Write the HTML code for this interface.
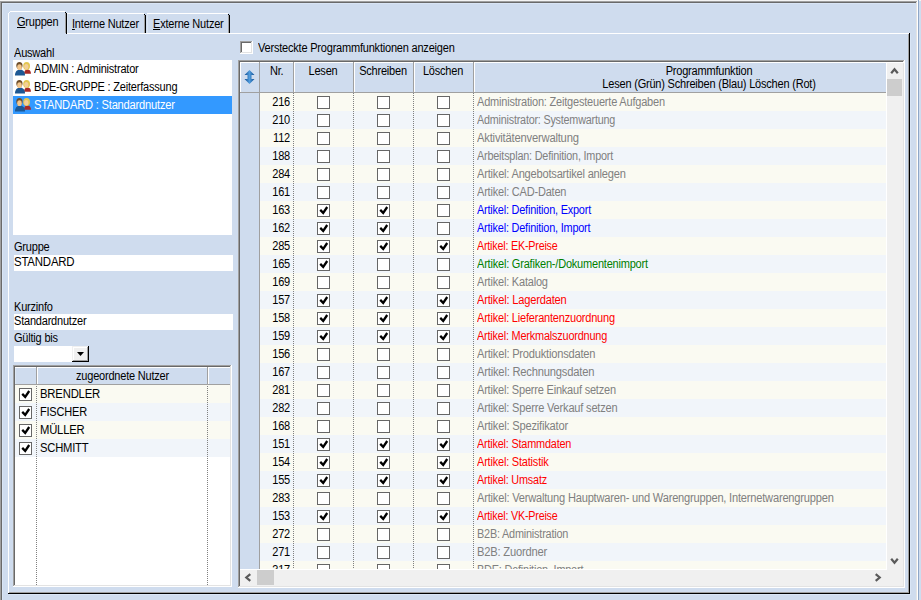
<!DOCTYPE html>
<html><head><meta charset="utf-8"><style>
html,body{margin:0;padding:0;}
body{width:921px;height:600px;overflow:hidden;background:#cfdcee;position:relative;font-family:"Liberation Sans",sans-serif;font-size:11px;}
div,svg{position:absolute;} svg{overflow:visible;}
.t{white-space:nowrap;line-height:13px;font-size:12px;letter-spacing:-0.22px;transform:scaleX(0.9167);transform-origin:0 0;}
.c{transform-origin:50% 0;}
.r{transform-origin:100% 0;}
u{text-decoration:underline;}
</style></head><body>
<div style="left:0px;top:0px;width:921px;height:1px;background:#f4f4f4;"></div><div style="left:0px;top:1px;width:917px;height:1px;background:#a0a0a0;"></div><div style="left:0px;top:1px;width:1px;height:599px;background:#a0a0a0;"></div><div style="left:1px;top:2px;width:915px;height:1px;background:#696969;"></div><div style="left:1px;top:2px;width:1px;height:598px;background:#696969;"></div><div style="left:2px;top:3px;width:913px;height:1px;background:#d9e5f5;"></div><div style="left:2px;top:3px;width:1px;height:597px;background:#d9e5f5;"></div><div style="left:916px;top:2px;width:1px;height:598px;background:#e3e3e3;"></div><div style="left:917px;top:1px;width:1px;height:599px;background:#ffffff;"></div><div style="left:918px;top:0px;width:1px;height:600px;background:#8fa7c8;"></div><div style="left:8px;top:33px;width:901px;height:1px;background:#ffffff;"></div><div style="left:8px;top:33px;width:1px;height:560px;background:#ffffff;"></div><div style="left:908px;top:34px;width:1px;height:559px;background:#a0a0a0;"></div><div style="left:9px;top:592px;width:900px;height:1px;background:#a0a0a0;"></div><div style="left:909px;top:33px;width:1px;height:561px;background:#000000;"></div><div style="left:8px;top:593px;width:902px;height:1px;background:#000000;"></div><div style="left:910px;top:34px;width:1px;height:561px;background:#d9e5f5;"></div><div style="left:9px;top:594px;width:902px;height:1px;background:#d9e5f5;"></div><div style="left:9px;top:12px;width:57px;height:22px;background:#cfdcee;"></div><div style="left:8px;top:13px;width:1px;height:21px;background:#ffffff;"></div><div style="left:9px;top:12px;width:1px;height:1px;background:#ffffff;"></div><div style="left:10px;top:11px;width:55px;height:1px;background:#ffffff;"></div><div style="left:65px;top:12px;width:1px;height:1px;background:#000000;"></div><div style="left:66px;top:13px;width:1px;height:21px;background:#000000;"></div><div style="left:65px;top:13px;width:1px;height:21px;background:#a0a0a0;"></div><div style="left:67px;top:14px;width:1px;height:19px;background:#dbe6f3;"></div><div style="left:67px;top:13px;width:77px;height:1px;background:#ffffff;"></div><div style="left:144px;top:14px;width:1px;height:1px;background:#000000;"></div><div style="left:145px;top:15px;width:1px;height:18px;background:#000000;"></div><div style="left:144px;top:15px;width:1px;height:18px;background:#a0a0a0;"></div><div style="left:147px;top:14px;width:1px;height:19px;background:#dbe6f3;"></div><div style="left:147px;top:13px;width:81px;height:1px;background:#ffffff;"></div><div style="left:228px;top:14px;width:1px;height:1px;background:#000000;"></div><div style="left:229px;top:15px;width:1px;height:18px;background:#000000;"></div><div style="left:228px;top:15px;width:1px;height:18px;background:#a0a0a0;"></div><div style="left:9px;top:33px;width:57px;height:1px;background:#cfdcee;"></div><div class="t" style="left:17px;top:16px;color:#000;"><u>G</u>ruppen</div><div class="t" style="left:72px;top:18px;color:#000;"><u>I</u>nterne Nutzer</div><div class="t" style="left:153px;top:18px;color:#000;"><u>E</u>xterne Nutzer</div><div class="t" style="left:14px;top:47px;color:#000;">Auswahl</div><div style="left:13px;top:60px;width:219px;height:175px;background:#ffffff;"></div><div style="left:13px;top:96px;width:219px;height:18px;background:#3399ff;"></div><svg style="left:14px;top:61px" width="18" height="15" viewBox="0 0 18 15">
<path d="M10 12.8C10 9.8 11.5 8.4 13.5 8.4C15.5 8.4 17 9.8 17 12.8Z" fill="#a82a26"/>
<ellipse cx="12.6" cy="5" rx="3.4" ry="4.1" fill="#e3c650"/>
<ellipse cx="12.3" cy="5.8" rx="2.1" ry="2.7" fill="#f3cf98"/>
<path d="M1 14.5C1 10.8 3 8.6 6 8.6C9 8.6 11 10.8 11 14.5Z" fill="#1d5894"/>
<ellipse cx="5.4" cy="4.6" rx="3.1" ry="3.6" fill="#6f4f2c"/>
<ellipse cx="5.5" cy="6.2" rx="2.3" ry="2.9" fill="#f3c68c"/>
</svg><svg style="left:14px;top:79px" width="18" height="15" viewBox="0 0 18 15">
<path d="M10 12.8C10 9.8 11.5 8.4 13.5 8.4C15.5 8.4 17 9.8 17 12.8Z" fill="#a82a26"/>
<ellipse cx="12.6" cy="5" rx="3.4" ry="4.1" fill="#e3c650"/>
<ellipse cx="12.3" cy="5.8" rx="2.1" ry="2.7" fill="#f3cf98"/>
<path d="M1 14.5C1 10.8 3 8.6 6 8.6C9 8.6 11 10.8 11 14.5Z" fill="#1d5894"/>
<ellipse cx="5.4" cy="4.6" rx="3.1" ry="3.6" fill="#6f4f2c"/>
<ellipse cx="5.5" cy="6.2" rx="2.3" ry="2.9" fill="#f3c68c"/>
</svg><svg style="left:14px;top:97px" width="18" height="15" viewBox="0 0 18 15">
<path d="M10 12.8C10 9.8 11.5 8.4 13.5 8.4C15.5 8.4 17 9.8 17 12.8Z" fill="#a82a26"/>
<ellipse cx="12.6" cy="5" rx="3.4" ry="4.1" fill="#e3c650"/>
<ellipse cx="12.3" cy="5.8" rx="2.1" ry="2.7" fill="#f3cf98"/>
<path d="M1 14.5C1 10.8 3 8.6 6 8.6C9 8.6 11 10.8 11 14.5Z" fill="#1d5894"/>
<ellipse cx="5.4" cy="4.6" rx="3.1" ry="3.6" fill="#6f4f2c"/>
<ellipse cx="5.5" cy="6.2" rx="2.3" ry="2.9" fill="#f3c68c"/>
</svg><div class="t" style="left:34px;top:63px;color:#000;">ADMIN : Administrator</div><div class="t" style="left:34px;top:81px;color:#000;">BDE-GRUPPE : Zeiterfassung</div><div class="t" style="left:34px;top:99px;color:#ffffff;transform:scaleX(0.9286);">STANDARD : Standardnutzer</div><div class="t" style="left:14px;top:241px;color:#000;">Gruppe</div><div style="left:14px;top:255px;width:219px;height:16px;background:#ffffff;"></div><div class="t" style="left:14px;top:256px;color:#000;transform:scaleX(0.9534);">STANDARD</div><div class="t" style="left:14px;top:301px;color:#000;">Kurzinfo</div><div style="left:14px;top:314px;width:219px;height:16px;background:#ffffff;"></div><div class="t" style="left:14px;top:315px;color:#000;">Standardnutzer</div><div class="t" style="left:14px;top:332px;color:#000;">G&uuml;ltig bis</div><div style="left:14px;top:346px;width:58px;height:16px;background:#ffffff;"></div><div style="left:72px;top:346px;width:17px;height:16px;background:#f0f0f0;"></div><div style="left:72px;top:346px;width:16px;height:1px;background:#f0f0f0;"></div><div style="left:72px;top:346px;width:1px;height:15px;background:#f0f0f0;"></div><div style="left:73px;top:347px;width:14px;height:1px;background:#ffffff;"></div><div style="left:73px;top:347px;width:1px;height:13px;background:#ffffff;"></div><div style="left:73px;top:360px;width:15px;height:1px;background:#a0a0a0;"></div><div style="left:87px;top:347px;width:1px;height:14px;background:#a0a0a0;"></div><div style="left:72px;top:361px;width:17px;height:1px;background:#000000;"></div><div style="left:88px;top:346px;width:1px;height:16px;background:#000000;"></div><svg style="left:77px;top:352px" width="8" height="4" viewBox="0 0 8 4"><path d="M0 0H7L3.5 4Z" fill="#000"/></svg><div style="left:13px;top:365px;width:219px;height:222px;background:#ffffff;"></div><div style="left:13px;top:365px;width:218px;height:1px;background:#a0a0a0;"></div><div style="left:13px;top:365px;width:1px;height:221px;background:#a0a0a0;"></div><div style="left:14px;top:366px;width:216px;height:1px;background:#696969;"></div><div style="left:14px;top:366px;width:1px;height:219px;background:#696969;"></div><div style="left:14px;top:585px;width:217px;height:1px;background:#e3e3e3;"></div><div style="left:230px;top:366px;width:1px;height:220px;background:#e3e3e3;"></div><div style="left:13px;top:586px;width:219px;height:1px;background:#ffffff;"></div><div style="left:231px;top:365px;width:1px;height:222px;background:#ffffff;"></div><div style="left:15px;top:367px;width:215px;height:18px;background:#cfdcee;"></div><div style="left:15px;top:367px;width:215px;height:1px;background:#ffffff;"></div><div style="left:15px;top:368px;width:1px;height:16px;background:#dde7f3;"></div><div style="left:15px;top:384px;width:215px;height:1px;background:#a0a0a0;"></div><div style="left:36px;top:367px;width:1px;height:18px;background:#a0a0a0;"></div><div style="left:37px;top:368px;width:1px;height:16px;background:#ffffff;"></div><div style="left:207px;top:367px;width:1px;height:18px;background:#a0a0a0;"></div><div style="left:208px;top:368px;width:1px;height:16px;background:#ffffff;"></div><div class="t" style="left:76px;top:370px;color:#000;">zugeordnete Nutzer</div><div style="left:15px;top:385px;width:215px;height:18px;background:#fafaf2;"></div><svg style="left:19px;top:388px" width="13" height="13" viewBox="0 0 13 13"><rect x="0.5" y="0.5" width="12" height="12" fill="#fff" stroke="#666"/><path d="M3.2 5.9L6.2 8.9L10.2 3" fill="none" stroke="#000" stroke-width="2.3"/></svg><div class="t" style="left:40px;top:388px;color:#000;transform:scaleX(0.9442);">BRENDLER</div><div style="left:15px;top:403px;width:215px;height:18px;background:#f1f5fa;"></div><svg style="left:19px;top:406px" width="13" height="13" viewBox="0 0 13 13"><rect x="0.5" y="0.5" width="12" height="12" fill="#fff" stroke="#666"/><path d="M3.2 5.9L6.2 8.9L10.2 3" fill="none" stroke="#000" stroke-width="2.3"/></svg><div class="t" style="left:40px;top:406px;color:#000;transform:scaleX(0.9167);">FISCHER</div><div style="left:15px;top:421px;width:215px;height:18px;background:#fafaf2;"></div><svg style="left:19px;top:424px" width="13" height="13" viewBox="0 0 13 13"><rect x="0.5" y="0.5" width="12" height="12" fill="#fff" stroke="#666"/><path d="M3.2 5.9L6.2 8.9L10.2 3" fill="none" stroke="#000" stroke-width="2.3"/></svg><div class="t" style="left:40px;top:424px;color:#000;transform:scaleX(0.9378);">M&Uuml;LLER</div><div style="left:15px;top:439px;width:215px;height:18px;background:#f1f5fa;"></div><svg style="left:19px;top:442px" width="13" height="13" viewBox="0 0 13 13"><rect x="0.5" y="0.5" width="12" height="12" fill="#fff" stroke="#666"/><path d="M3.2 5.9L6.2 8.9L10.2 3" fill="none" stroke="#000" stroke-width="2.3"/></svg><div class="t" style="left:40px;top:442px;color:#000;transform:scaleX(0.9350);">SCHMITT</div><div style="left:36px;top:386px;width:1px;height:199px;background:repeating-linear-gradient(#808080 0 1px,transparent 1px 2px)"></div><div style="left:207px;top:386px;width:1px;height:199px;background:repeating-linear-gradient(#808080 0 1px,transparent 1px 2px)"></div><div style="left:240px;top:41px;width:13px;height:13px;background:#ffffff;"></div><div style="left:240px;top:41px;width:12px;height:1px;background:#a0a0a0;"></div><div style="left:240px;top:41px;width:1px;height:12px;background:#a0a0a0;"></div><div style="left:241px;top:42px;width:10px;height:1px;background:#696969;"></div><div style="left:241px;top:42px;width:1px;height:10px;background:#696969;"></div><div style="left:241px;top:52px;width:11px;height:1px;background:#e3e3e3;"></div><div style="left:251px;top:42px;width:1px;height:11px;background:#e3e3e3;"></div><div style="left:240px;top:53px;width:13px;height:1px;background:#ffffff;"></div><div style="left:252px;top:41px;width:1px;height:13px;background:#ffffff;"></div><div class="t" style="left:258px;top:42px;color:#000;">Versteckte Programmfunktionen anzeigen</div><div style="left:238px;top:60px;width:667px;height:528px;background:#ffffff;"></div><div style="left:238px;top:60px;width:666px;height:1px;background:#a0a0a0;"></div><div style="left:238px;top:60px;width:1px;height:527px;background:#a0a0a0;"></div><div style="left:239px;top:61px;width:664px;height:1px;background:#696969;"></div><div style="left:239px;top:61px;width:1px;height:525px;background:#696969;"></div><div style="left:239px;top:586px;width:665px;height:1px;background:#e3e3e3;"></div><div style="left:903px;top:61px;width:1px;height:526px;background:#e3e3e3;"></div><div style="left:238px;top:587px;width:667px;height:1px;background:#ffffff;"></div><div style="left:904px;top:60px;width:1px;height:528px;background:#ffffff;"></div><div style="left:240px;top:62px;width:646px;height:31px;background:#cfdcee;"></div><div style="left:240px;top:62px;width:646px;height:1px;background:#ffffff;"></div><div style="left:240px;top:62px;width:1px;height:30px;background:#ffffff;"></div><div style="left:240px;top:92px;width:646px;height:1px;background:#a0a0a0;"></div><div style="left:259px;top:62px;width:1px;height:31px;background:#a0a0a0;"></div><div style="left:293px;top:62px;width:1px;height:31px;background:#a0a0a0;"></div><div style="left:294px;top:63px;width:1px;height:29px;background:#ffffff;"></div><div style="left:353px;top:62px;width:1px;height:31px;background:#a0a0a0;"></div><div style="left:354px;top:63px;width:1px;height:29px;background:#ffffff;"></div><div style="left:413px;top:62px;width:1px;height:31px;background:#a0a0a0;"></div><div style="left:414px;top:63px;width:1px;height:29px;background:#ffffff;"></div><div style="left:473px;top:62px;width:1px;height:31px;background:#a0a0a0;"></div><div style="left:474px;top:63px;width:1px;height:29px;background:#ffffff;"></div><div style="left:240px;top:93px;width:19px;height:476px;background:#cfdcee;"></div><div style="left:259px;top:93px;width:1px;height:476px;background:#a0a0a0;"></div><svg style="left:244px;top:69px" width="11" height="16" viewBox="0 0 11 16">
<defs><linearGradient id="ga" x1="0" x2="1"><stop offset="0" stop-color="#0e4d92"/><stop offset="0.5" stop-color="#4f9bdc"/><stop offset="1" stop-color="#0e4d92"/></linearGradient></defs>
<path d="M5.5 1L10.5 6H7.5V10H10.5L5.5 15L0.5 10H3.5V6H0.5Z" fill="url(#ga)"/></svg><div class="t" style="left:270px;top:65px;color:#000;">Nr.</div><div class="t c" style="left:123.0px;top:65px;width:400px;text-align:center;color:#000;">Lesen</div><div class="t c" style="left:183.0px;top:65px;width:400px;text-align:center;color:#000;">Schreiben</div><div class="t c" style="left:243.0px;top:65px;width:400px;text-align:center;color:#000;">L&ouml;schen</div><div class="t c" style="left:509.0px;top:65px;width:400px;text-align:center;color:#000;">Programmfunktion</div><div class="t c" style="left:509.0px;top:78px;width:400px;text-align:center;color:#000;">Lesen (Gr&uuml;n) Schreiben (Blau) L&ouml;schen (Rot)</div><div style="left:260px;top:93px;width:626px;height:476px;overflow:hidden"><div style="left:0px;top:0px;width:626px;height:18px;background:#fafaf2;"></div><div class="t r" style="left:-170px;top:3px;width:200px;text-align:right;color:#000;">216</div><svg style="left:57px;top:3px" width="13" height="13" viewBox="0 0 13 13"><rect x="0.5" y="0.5" width="12" height="12" fill="#fff" stroke="#666"/></svg><svg style="left:117px;top:3px" width="13" height="13" viewBox="0 0 13 13"><rect x="0.5" y="0.5" width="12" height="12" fill="#fff" stroke="#666"/></svg><svg style="left:177px;top:3px" width="13" height="13" viewBox="0 0 13 13"><rect x="0.5" y="0.5" width="12" height="12" fill="#fff" stroke="#666"/></svg><div class="t" style="left:217px;top:3px;color:#808080;transform:scaleX(0.9167);">Administration: Zeitgesteuerte Aufgaben</div><div style="left:0px;top:18px;width:626px;height:18px;background:#f1f5fa;"></div><div class="t r" style="left:-170px;top:21px;width:200px;text-align:right;color:#000;">210</div><svg style="left:57px;top:21px" width="13" height="13" viewBox="0 0 13 13"><rect x="0.5" y="0.5" width="12" height="12" fill="#fff" stroke="#666"/></svg><svg style="left:117px;top:21px" width="13" height="13" viewBox="0 0 13 13"><rect x="0.5" y="0.5" width="12" height="12" fill="#fff" stroke="#666"/></svg><svg style="left:177px;top:21px" width="13" height="13" viewBox="0 0 13 13"><rect x="0.5" y="0.5" width="12" height="12" fill="#fff" stroke="#666"/></svg><div class="t" style="left:217px;top:21px;color:#808080;transform:scaleX(0.8971);">Administrator: Systemwartung</div><div style="left:0px;top:36px;width:626px;height:18px;background:#fafaf2;"></div><div class="t r" style="left:-170px;top:39px;width:200px;text-align:right;color:#000;">112</div><svg style="left:57px;top:39px" width="13" height="13" viewBox="0 0 13 13"><rect x="0.5" y="0.5" width="12" height="12" fill="#fff" stroke="#666"/></svg><svg style="left:117px;top:39px" width="13" height="13" viewBox="0 0 13 13"><rect x="0.5" y="0.5" width="12" height="12" fill="#fff" stroke="#666"/></svg><svg style="left:177px;top:39px" width="13" height="13" viewBox="0 0 13 13"><rect x="0.5" y="0.5" width="12" height="12" fill="#fff" stroke="#666"/></svg><div class="t" style="left:217px;top:39px;color:#808080;transform:scaleX(0.9352);">Aktivit&auml;tenverwaltung</div><div style="left:0px;top:54px;width:626px;height:18px;background:#f1f5fa;"></div><div class="t r" style="left:-170px;top:57px;width:200px;text-align:right;color:#000;">188</div><svg style="left:57px;top:57px" width="13" height="13" viewBox="0 0 13 13"><rect x="0.5" y="0.5" width="12" height="12" fill="#fff" stroke="#666"/></svg><svg style="left:117px;top:57px" width="13" height="13" viewBox="0 0 13 13"><rect x="0.5" y="0.5" width="12" height="12" fill="#fff" stroke="#666"/></svg><svg style="left:177px;top:57px" width="13" height="13" viewBox="0 0 13 13"><rect x="0.5" y="0.5" width="12" height="12" fill="#fff" stroke="#666"/></svg><div class="t" style="left:217px;top:57px;color:#808080;transform:scaleX(0.9034);">Arbeitsplan: Definition, Import</div><div style="left:0px;top:72px;width:626px;height:18px;background:#fafaf2;"></div><div class="t r" style="left:-170px;top:75px;width:200px;text-align:right;color:#000;">284</div><svg style="left:57px;top:75px" width="13" height="13" viewBox="0 0 13 13"><rect x="0.5" y="0.5" width="12" height="12" fill="#fff" stroke="#666"/></svg><svg style="left:117px;top:75px" width="13" height="13" viewBox="0 0 13 13"><rect x="0.5" y="0.5" width="12" height="12" fill="#fff" stroke="#666"/></svg><svg style="left:177px;top:75px" width="13" height="13" viewBox="0 0 13 13"><rect x="0.5" y="0.5" width="12" height="12" fill="#fff" stroke="#666"/></svg><div class="t" style="left:217px;top:75px;color:#808080;transform:scaleX(0.9229);">Artikel: Angebotsartikel anlegen</div><div style="left:0px;top:90px;width:626px;height:18px;background:#f1f5fa;"></div><div class="t r" style="left:-170px;top:93px;width:200px;text-align:right;color:#000;">161</div><svg style="left:57px;top:93px" width="13" height="13" viewBox="0 0 13 13"><rect x="0.5" y="0.5" width="12" height="12" fill="#fff" stroke="#666"/></svg><svg style="left:117px;top:93px" width="13" height="13" viewBox="0 0 13 13"><rect x="0.5" y="0.5" width="12" height="12" fill="#fff" stroke="#666"/></svg><svg style="left:177px;top:93px" width="13" height="13" viewBox="0 0 13 13"><rect x="0.5" y="0.5" width="12" height="12" fill="#fff" stroke="#666"/></svg><div class="t" style="left:217px;top:93px;color:#808080;transform:scaleX(0.9167);">Artikel: CAD-Daten</div><div style="left:0px;top:108px;width:626px;height:18px;background:#fafaf2;"></div><div class="t r" style="left:-170px;top:111px;width:200px;text-align:right;color:#000;">163</div><svg style="left:57px;top:111px" width="13" height="13" viewBox="0 0 13 13"><rect x="0.5" y="0.5" width="12" height="12" fill="#fff" stroke="#666"/><path d="M3.2 5.9L6.2 8.9L10.2 3" fill="none" stroke="#000" stroke-width="2.3"/></svg><svg style="left:117px;top:111px" width="13" height="13" viewBox="0 0 13 13"><rect x="0.5" y="0.5" width="12" height="12" fill="#fff" stroke="#666"/><path d="M3.2 5.9L6.2 8.9L10.2 3" fill="none" stroke="#000" stroke-width="2.3"/></svg><svg style="left:177px;top:111px" width="13" height="13" viewBox="0 0 13 13"><rect x="0.5" y="0.5" width="12" height="12" fill="#fff" stroke="#666"/></svg><div class="t" style="left:217px;top:111px;color:#0000ff;transform:scaleX(0.9087);">Artikel: Definition, Export</div><div style="left:0px;top:126px;width:626px;height:18px;background:#f1f5fa;"></div><div class="t r" style="left:-170px;top:129px;width:200px;text-align:right;color:#000;">162</div><svg style="left:57px;top:129px" width="13" height="13" viewBox="0 0 13 13"><rect x="0.5" y="0.5" width="12" height="12" fill="#fff" stroke="#666"/><path d="M3.2 5.9L6.2 8.9L10.2 3" fill="none" stroke="#000" stroke-width="2.3"/></svg><svg style="left:117px;top:129px" width="13" height="13" viewBox="0 0 13 13"><rect x="0.5" y="0.5" width="12" height="12" fill="#fff" stroke="#666"/><path d="M3.2 5.9L6.2 8.9L10.2 3" fill="none" stroke="#000" stroke-width="2.3"/></svg><svg style="left:177px;top:129px" width="13" height="13" viewBox="0 0 13 13"><rect x="0.5" y="0.5" width="12" height="12" fill="#fff" stroke="#666"/></svg><div class="t" style="left:217px;top:129px;color:#0000ff;transform:scaleX(0.9087);">Artikel: Definition, Import</div><div style="left:0px;top:144px;width:626px;height:18px;background:#fafaf2;"></div><div class="t r" style="left:-170px;top:147px;width:200px;text-align:right;color:#000;">285</div><svg style="left:57px;top:147px" width="13" height="13" viewBox="0 0 13 13"><rect x="0.5" y="0.5" width="12" height="12" fill="#fff" stroke="#666"/><path d="M3.2 5.9L6.2 8.9L10.2 3" fill="none" stroke="#000" stroke-width="2.3"/></svg><svg style="left:117px;top:147px" width="13" height="13" viewBox="0 0 13 13"><rect x="0.5" y="0.5" width="12" height="12" fill="#fff" stroke="#666"/><path d="M3.2 5.9L6.2 8.9L10.2 3" fill="none" stroke="#000" stroke-width="2.3"/></svg><svg style="left:177px;top:147px" width="13" height="13" viewBox="0 0 13 13"><rect x="0.5" y="0.5" width="12" height="12" fill="#fff" stroke="#666"/><path d="M3.2 5.9L6.2 8.9L10.2 3" fill="none" stroke="#000" stroke-width="2.3"/></svg><div class="t" style="left:217px;top:147px;color:#ff0000;transform:scaleX(0.8943);">Artikel: EK-Preise</div><div style="left:0px;top:162px;width:626px;height:18px;background:#f1f5fa;"></div><div class="t r" style="left:-170px;top:165px;width:200px;text-align:right;color:#000;">165</div><svg style="left:57px;top:165px" width="13" height="13" viewBox="0 0 13 13"><rect x="0.5" y="0.5" width="12" height="12" fill="#fff" stroke="#666"/><path d="M3.2 5.9L6.2 8.9L10.2 3" fill="none" stroke="#000" stroke-width="2.3"/></svg><svg style="left:117px;top:165px" width="13" height="13" viewBox="0 0 13 13"><rect x="0.5" y="0.5" width="12" height="12" fill="#fff" stroke="#666"/></svg><svg style="left:177px;top:165px" width="13" height="13" viewBox="0 0 13 13"><rect x="0.5" y="0.5" width="12" height="12" fill="#fff" stroke="#666"/></svg><div class="t" style="left:217px;top:165px;color:#008000;transform:scaleX(0.9167);">Artikel: Grafiken-/Dokumentenimport</div><div style="left:0px;top:180px;width:626px;height:18px;background:#fafaf2;"></div><div class="t r" style="left:-170px;top:183px;width:200px;text-align:right;color:#000;">169</div><svg style="left:57px;top:183px" width="13" height="13" viewBox="0 0 13 13"><rect x="0.5" y="0.5" width="12" height="12" fill="#fff" stroke="#666"/></svg><svg style="left:117px;top:183px" width="13" height="13" viewBox="0 0 13 13"><rect x="0.5" y="0.5" width="12" height="12" fill="#fff" stroke="#666"/></svg><svg style="left:177px;top:183px" width="13" height="13" viewBox="0 0 13 13"><rect x="0.5" y="0.5" width="12" height="12" fill="#fff" stroke="#666"/></svg><div class="t" style="left:217px;top:183px;color:#808080;transform:scaleX(0.9167);">Artikel: Katalog</div><div style="left:0px;top:198px;width:626px;height:18px;background:#f1f5fa;"></div><div class="t r" style="left:-170px;top:201px;width:200px;text-align:right;color:#000;">157</div><svg style="left:57px;top:201px" width="13" height="13" viewBox="0 0 13 13"><rect x="0.5" y="0.5" width="12" height="12" fill="#fff" stroke="#666"/><path d="M3.2 5.9L6.2 8.9L10.2 3" fill="none" stroke="#000" stroke-width="2.3"/></svg><svg style="left:117px;top:201px" width="13" height="13" viewBox="0 0 13 13"><rect x="0.5" y="0.5" width="12" height="12" fill="#fff" stroke="#666"/><path d="M3.2 5.9L6.2 8.9L10.2 3" fill="none" stroke="#000" stroke-width="2.3"/></svg><svg style="left:177px;top:201px" width="13" height="13" viewBox="0 0 13 13"><rect x="0.5" y="0.5" width="12" height="12" fill="#fff" stroke="#666"/><path d="M3.2 5.9L6.2 8.9L10.2 3" fill="none" stroke="#000" stroke-width="2.3"/></svg><div class="t" style="left:217px;top:201px;color:#ff0000;transform:scaleX(0.9272);">Artikel: Lagerdaten</div><div style="left:0px;top:216px;width:626px;height:18px;background:#fafaf2;"></div><div class="t r" style="left:-170px;top:219px;width:200px;text-align:right;color:#000;">158</div><svg style="left:57px;top:219px" width="13" height="13" viewBox="0 0 13 13"><rect x="0.5" y="0.5" width="12" height="12" fill="#fff" stroke="#666"/><path d="M3.2 5.9L6.2 8.9L10.2 3" fill="none" stroke="#000" stroke-width="2.3"/></svg><svg style="left:117px;top:219px" width="13" height="13" viewBox="0 0 13 13"><rect x="0.5" y="0.5" width="12" height="12" fill="#fff" stroke="#666"/><path d="M3.2 5.9L6.2 8.9L10.2 3" fill="none" stroke="#000" stroke-width="2.3"/></svg><svg style="left:177px;top:219px" width="13" height="13" viewBox="0 0 13 13"><rect x="0.5" y="0.5" width="12" height="12" fill="#fff" stroke="#666"/><path d="M3.2 5.9L6.2 8.9L10.2 3" fill="none" stroke="#000" stroke-width="2.3"/></svg><div class="t" style="left:217px;top:219px;color:#ff0000;transform:scaleX(0.9167);">Artikel: Lieferantenzuordnung</div><div style="left:0px;top:234px;width:626px;height:18px;background:#f1f5fa;"></div><div class="t r" style="left:-170px;top:237px;width:200px;text-align:right;color:#000;">159</div><svg style="left:57px;top:237px" width="13" height="13" viewBox="0 0 13 13"><rect x="0.5" y="0.5" width="12" height="12" fill="#fff" stroke="#666"/><path d="M3.2 5.9L6.2 8.9L10.2 3" fill="none" stroke="#000" stroke-width="2.3"/></svg><svg style="left:117px;top:237px" width="13" height="13" viewBox="0 0 13 13"><rect x="0.5" y="0.5" width="12" height="12" fill="#fff" stroke="#666"/><path d="M3.2 5.9L6.2 8.9L10.2 3" fill="none" stroke="#000" stroke-width="2.3"/></svg><svg style="left:177px;top:237px" width="13" height="13" viewBox="0 0 13 13"><rect x="0.5" y="0.5" width="12" height="12" fill="#fff" stroke="#666"/><path d="M3.2 5.9L6.2 8.9L10.2 3" fill="none" stroke="#000" stroke-width="2.3"/></svg><div class="t" style="left:217px;top:237px;color:#ff0000;transform:scaleX(0.9096);">Artikel: Merkmalszuordnung</div><div style="left:0px;top:252px;width:626px;height:18px;background:#fafaf2;"></div><div class="t r" style="left:-170px;top:255px;width:200px;text-align:right;color:#000;">156</div><svg style="left:57px;top:255px" width="13" height="13" viewBox="0 0 13 13"><rect x="0.5" y="0.5" width="12" height="12" fill="#fff" stroke="#666"/></svg><svg style="left:117px;top:255px" width="13" height="13" viewBox="0 0 13 13"><rect x="0.5" y="0.5" width="12" height="12" fill="#fff" stroke="#666"/></svg><svg style="left:177px;top:255px" width="13" height="13" viewBox="0 0 13 13"><rect x="0.5" y="0.5" width="12" height="12" fill="#fff" stroke="#666"/></svg><div class="t" style="left:217px;top:255px;color:#808080;transform:scaleX(0.9246);">Artikel: Produktionsdaten</div><div style="left:0px;top:270px;width:626px;height:18px;background:#f1f5fa;"></div><div class="t r" style="left:-170px;top:273px;width:200px;text-align:right;color:#000;">167</div><svg style="left:57px;top:273px" width="13" height="13" viewBox="0 0 13 13"><rect x="0.5" y="0.5" width="12" height="12" fill="#fff" stroke="#666"/></svg><svg style="left:117px;top:273px" width="13" height="13" viewBox="0 0 13 13"><rect x="0.5" y="0.5" width="12" height="12" fill="#fff" stroke="#666"/></svg><svg style="left:177px;top:273px" width="13" height="13" viewBox="0 0 13 13"><rect x="0.5" y="0.5" width="12" height="12" fill="#fff" stroke="#666"/></svg><div class="t" style="left:217px;top:273px;color:#808080;transform:scaleX(0.9328);">Artikel: Rechnungsdaten</div><div style="left:0px;top:288px;width:626px;height:18px;background:#fafaf2;"></div><div class="t r" style="left:-170px;top:291px;width:200px;text-align:right;color:#000;">281</div><svg style="left:57px;top:291px" width="13" height="13" viewBox="0 0 13 13"><rect x="0.5" y="0.5" width="12" height="12" fill="#fff" stroke="#666"/></svg><svg style="left:117px;top:291px" width="13" height="13" viewBox="0 0 13 13"><rect x="0.5" y="0.5" width="12" height="12" fill="#fff" stroke="#666"/></svg><svg style="left:177px;top:291px" width="13" height="13" viewBox="0 0 13 13"><rect x="0.5" y="0.5" width="12" height="12" fill="#fff" stroke="#666"/></svg><div class="t" style="left:217px;top:291px;color:#808080;transform:scaleX(0.9167);">Artikel: Sperre Einkauf setzen</div><div style="left:0px;top:306px;width:626px;height:18px;background:#f1f5fa;"></div><div class="t r" style="left:-170px;top:309px;width:200px;text-align:right;color:#000;">282</div><svg style="left:57px;top:309px" width="13" height="13" viewBox="0 0 13 13"><rect x="0.5" y="0.5" width="12" height="12" fill="#fff" stroke="#666"/></svg><svg style="left:117px;top:309px" width="13" height="13" viewBox="0 0 13 13"><rect x="0.5" y="0.5" width="12" height="12" fill="#fff" stroke="#666"/></svg><svg style="left:177px;top:309px" width="13" height="13" viewBox="0 0 13 13"><rect x="0.5" y="0.5" width="12" height="12" fill="#fff" stroke="#666"/></svg><div class="t" style="left:217px;top:309px;color:#808080;transform:scaleX(0.9233);">Artikel: Sperre Verkauf setzen</div><div style="left:0px;top:324px;width:626px;height:18px;background:#fafaf2;"></div><div class="t r" style="left:-170px;top:327px;width:200px;text-align:right;color:#000;">168</div><svg style="left:57px;top:327px" width="13" height="13" viewBox="0 0 13 13"><rect x="0.5" y="0.5" width="12" height="12" fill="#fff" stroke="#666"/></svg><svg style="left:117px;top:327px" width="13" height="13" viewBox="0 0 13 13"><rect x="0.5" y="0.5" width="12" height="12" fill="#fff" stroke="#666"/></svg><svg style="left:177px;top:327px" width="13" height="13" viewBox="0 0 13 13"><rect x="0.5" y="0.5" width="12" height="12" fill="#fff" stroke="#666"/></svg><div class="t" style="left:217px;top:327px;color:#808080;transform:scaleX(0.9270);">Artikel: Spezifikator</div><div style="left:0px;top:342px;width:626px;height:18px;background:#f1f5fa;"></div><div class="t r" style="left:-170px;top:345px;width:200px;text-align:right;color:#000;">151</div><svg style="left:57px;top:345px" width="13" height="13" viewBox="0 0 13 13"><rect x="0.5" y="0.5" width="12" height="12" fill="#fff" stroke="#666"/><path d="M3.2 5.9L6.2 8.9L10.2 3" fill="none" stroke="#000" stroke-width="2.3"/></svg><svg style="left:117px;top:345px" width="13" height="13" viewBox="0 0 13 13"><rect x="0.5" y="0.5" width="12" height="12" fill="#fff" stroke="#666"/><path d="M3.2 5.9L6.2 8.9L10.2 3" fill="none" stroke="#000" stroke-width="2.3"/></svg><svg style="left:177px;top:345px" width="13" height="13" viewBox="0 0 13 13"><rect x="0.5" y="0.5" width="12" height="12" fill="#fff" stroke="#666"/><path d="M3.2 5.9L6.2 8.9L10.2 3" fill="none" stroke="#000" stroke-width="2.3"/></svg><div class="t" style="left:217px;top:345px;color:#ff0000;transform:scaleX(0.9069);">Artikel: Stammdaten</div><div style="left:0px;top:360px;width:626px;height:18px;background:#fafaf2;"></div><div class="t r" style="left:-170px;top:363px;width:200px;text-align:right;color:#000;">154</div><svg style="left:57px;top:363px" width="13" height="13" viewBox="0 0 13 13"><rect x="0.5" y="0.5" width="12" height="12" fill="#fff" stroke="#666"/><path d="M3.2 5.9L6.2 8.9L10.2 3" fill="none" stroke="#000" stroke-width="2.3"/></svg><svg style="left:117px;top:363px" width="13" height="13" viewBox="0 0 13 13"><rect x="0.5" y="0.5" width="12" height="12" fill="#fff" stroke="#666"/><path d="M3.2 5.9L6.2 8.9L10.2 3" fill="none" stroke="#000" stroke-width="2.3"/></svg><svg style="left:177px;top:363px" width="13" height="13" viewBox="0 0 13 13"><rect x="0.5" y="0.5" width="12" height="12" fill="#fff" stroke="#666"/><path d="M3.2 5.9L6.2 8.9L10.2 3" fill="none" stroke="#000" stroke-width="2.3"/></svg><div class="t" style="left:217px;top:363px;color:#ff0000;transform:scaleX(0.9167);">Artikel: Statistik</div><div style="left:0px;top:378px;width:626px;height:18px;background:#f1f5fa;"></div><div class="t r" style="left:-170px;top:381px;width:200px;text-align:right;color:#000;">155</div><svg style="left:57px;top:381px" width="13" height="13" viewBox="0 0 13 13"><rect x="0.5" y="0.5" width="12" height="12" fill="#fff" stroke="#666"/><path d="M3.2 5.9L6.2 8.9L10.2 3" fill="none" stroke="#000" stroke-width="2.3"/></svg><svg style="left:117px;top:381px" width="13" height="13" viewBox="0 0 13 13"><rect x="0.5" y="0.5" width="12" height="12" fill="#fff" stroke="#666"/><path d="M3.2 5.9L6.2 8.9L10.2 3" fill="none" stroke="#000" stroke-width="2.3"/></svg><svg style="left:177px;top:381px" width="13" height="13" viewBox="0 0 13 13"><rect x="0.5" y="0.5" width="12" height="12" fill="#fff" stroke="#666"/><path d="M3.2 5.9L6.2 8.9L10.2 3" fill="none" stroke="#000" stroke-width="2.3"/></svg><div class="t" style="left:217px;top:381px;color:#ff0000;transform:scaleX(0.9036);">Artikel: Umsatz</div><div style="left:0px;top:396px;width:626px;height:18px;background:#fafaf2;"></div><div class="t r" style="left:-170px;top:399px;width:200px;text-align:right;color:#000;">283</div><svg style="left:57px;top:399px" width="13" height="13" viewBox="0 0 13 13"><rect x="0.5" y="0.5" width="12" height="12" fill="#fff" stroke="#666"/></svg><svg style="left:117px;top:399px" width="13" height="13" viewBox="0 0 13 13"><rect x="0.5" y="0.5" width="12" height="12" fill="#fff" stroke="#666"/></svg><svg style="left:177px;top:399px" width="13" height="13" viewBox="0 0 13 13"><rect x="0.5" y="0.5" width="12" height="12" fill="#fff" stroke="#666"/></svg><div class="t" style="left:217px;top:399px;color:#808080;transform:scaleX(0.9245);">Artikel: Verwaltung Hauptwaren- und Warengruppen, Internetwarengruppen</div><div style="left:0px;top:414px;width:626px;height:18px;background:#f1f5fa;"></div><div class="t r" style="left:-170px;top:417px;width:200px;text-align:right;color:#000;">153</div><svg style="left:57px;top:417px" width="13" height="13" viewBox="0 0 13 13"><rect x="0.5" y="0.5" width="12" height="12" fill="#fff" stroke="#666"/><path d="M3.2 5.9L6.2 8.9L10.2 3" fill="none" stroke="#000" stroke-width="2.3"/></svg><svg style="left:117px;top:417px" width="13" height="13" viewBox="0 0 13 13"><rect x="0.5" y="0.5" width="12" height="12" fill="#fff" stroke="#666"/><path d="M3.2 5.9L6.2 8.9L10.2 3" fill="none" stroke="#000" stroke-width="2.3"/></svg><svg style="left:177px;top:417px" width="13" height="13" viewBox="0 0 13 13"><rect x="0.5" y="0.5" width="12" height="12" fill="#fff" stroke="#666"/><path d="M3.2 5.9L6.2 8.9L10.2 3" fill="none" stroke="#000" stroke-width="2.3"/></svg><div class="t" style="left:217px;top:417px;color:#ff0000;transform:scaleX(0.8943);">Artikel: VK-Preise</div><div style="left:0px;top:432px;width:626px;height:18px;background:#fafaf2;"></div><div class="t r" style="left:-170px;top:435px;width:200px;text-align:right;color:#000;">272</div><svg style="left:57px;top:435px" width="13" height="13" viewBox="0 0 13 13"><rect x="0.5" y="0.5" width="12" height="12" fill="#fff" stroke="#666"/></svg><svg style="left:117px;top:435px" width="13" height="13" viewBox="0 0 13 13"><rect x="0.5" y="0.5" width="12" height="12" fill="#fff" stroke="#666"/></svg><svg style="left:177px;top:435px" width="13" height="13" viewBox="0 0 13 13"><rect x="0.5" y="0.5" width="12" height="12" fill="#fff" stroke="#666"/></svg><div class="t" style="left:217px;top:435px;color:#808080;transform:scaleX(0.9066);">B2B: Administration</div><div style="left:0px;top:450px;width:626px;height:18px;background:#f1f5fa;"></div><div class="t r" style="left:-170px;top:453px;width:200px;text-align:right;color:#000;">271</div><svg style="left:57px;top:453px" width="13" height="13" viewBox="0 0 13 13"><rect x="0.5" y="0.5" width="12" height="12" fill="#fff" stroke="#666"/></svg><svg style="left:117px;top:453px" width="13" height="13" viewBox="0 0 13 13"><rect x="0.5" y="0.5" width="12" height="12" fill="#fff" stroke="#666"/></svg><svg style="left:177px;top:453px" width="13" height="13" viewBox="0 0 13 13"><rect x="0.5" y="0.5" width="12" height="12" fill="#fff" stroke="#666"/></svg><div class="t" style="left:217px;top:453px;color:#808080;transform:scaleX(0.9302);">B2B: Zuordner</div><div style="left:0px;top:468px;width:626px;height:18px;background:#fafaf2;"></div><div class="t r" style="left:-170px;top:471px;width:200px;text-align:right;color:#000;">317</div><svg style="left:57px;top:471px" width="13" height="13" viewBox="0 0 13 13"><rect x="0.5" y="0.5" width="12" height="12" fill="#fff" stroke="#666"/></svg><svg style="left:117px;top:471px" width="13" height="13" viewBox="0 0 13 13"><rect x="0.5" y="0.5" width="12" height="12" fill="#fff" stroke="#666"/></svg><svg style="left:177px;top:471px" width="13" height="13" viewBox="0 0 13 13"><rect x="0.5" y="0.5" width="12" height="12" fill="#fff" stroke="#666"/></svg><div class="t" style="left:217px;top:471px;color:#808080;transform:scaleX(0.9081);">BDE: Definition, Import</div><div style="left:33px;top:0;width:1px;height:476px;background:repeating-linear-gradient(#808080 0 1px,transparent 1px 2px)"></div><div style="left:93px;top:0;width:1px;height:476px;background:repeating-linear-gradient(#808080 0 1px,transparent 1px 2px)"></div><div style="left:153px;top:0;width:1px;height:476px;background:repeating-linear-gradient(#808080 0 1px,transparent 1px 2px)"></div><div style="left:213px;top:0;width:1px;height:476px;background:repeating-linear-gradient(#808080 0 1px,transparent 1px 2px)"></div></div><div style="left:886px;top:62px;width:17px;height:524px;background:#f0f0f0;"></div><div style="left:886px;top:62px;width:18px;height:1px;background:#ffffff;"></div><div style="left:886px;top:62px;width:1px;height:508px;background:#ffffff;"></div><div style="left:240px;top:569px;width:647px;height:1px;background:#ffffff;"></div><div style="left:887px;top:79px;width:15px;height:17px;background:#cdcdcd;"></div><svg style="left:890px;top:67px" width="9" height="8" viewBox="0 0 9 8"><path d="M1.2 6.3L4.5 2.3L7.8 6.3" fill="none" stroke="#5a5a5a" stroke-width="2.2" stroke-linejoin="miter"/></svg><svg style="left:890px;top:557px" width="9" height="8" viewBox="0 0 9 8"><path d="M1.2 1.7L4.5 5.7L7.8 1.7" fill="none" stroke="#5a5a5a" stroke-width="2.2" stroke-linejoin="miter"/></svg><div style="left:240px;top:570px;width:646px;height:16px;background:#f0f0f0;"></div><div style="left:257px;top:570px;width:17px;height:15px;background:#cdcdcd;"></div><svg style="left:244px;top:573px" width="8" height="9" viewBox="0 0 8 9"><path d="M6.3 1.2L2.3 4.5L6.3 7.8" fill="none" stroke="#5a5a5a" stroke-width="2.2" stroke-linejoin="miter"/></svg><svg style="left:874px;top:573px" width="8" height="9" viewBox="0 0 8 9"><path d="M1.7 1.2L5.7 4.5L1.7 7.8" fill="none" stroke="#5a5a5a" stroke-width="2.2" stroke-linejoin="miter"/></svg>
</body></html>
